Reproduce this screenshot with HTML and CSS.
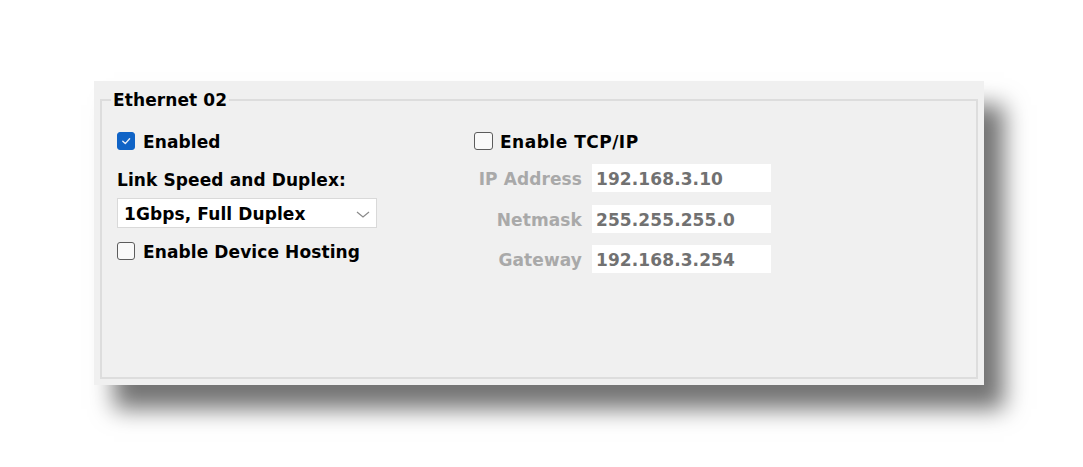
FILE: index.html
```html
<!DOCTYPE html>
<html lang="en">
<head>
<meta charset="utf-8">
<title>Ethernet 02</title>
<link rel="stylesheet" href="styles.css">
</head>
<body>
<div class="panel">
  <fieldset class="group">
    <legend class="group-title">Ethernet 02</legend>
    <div class="columns">
      <div class="col col-left">
        <label class="check-row">
          <span class="box box-checked">
            <svg width="18" height="18" viewBox="0 0 18 18"><path d="M5.8 9.3 L8.3 11.6 L12.6 6.8" fill="none" stroke="#e8eef8" stroke-width="1.4" stroke-linecap="round" stroke-linejoin="round"/></svg>
          </span>
          <span class="check-label">Enabled</span>
        </label>
        <div class="field-label">Link Speed and Duplex:</div>
        <div class="select">
          <span class="select-value">1Gbps, Full Duplex</span>
          <svg class="chevron" width="14" height="7" viewBox="0 0 14 7"><path d="M1 1 L7 6 L13 1" fill="none" stroke="#8a8a8a" stroke-width="1.2"/></svg>
        </div>
        <label class="check-row hosting">
          <span class="box"></span>
          <span class="check-label">Enable Device Hosting</span>
        </label>
      </div>
      <div class="col col-right">
        <label class="check-row">
          <span class="box"></span>
          <span class="check-label">Enable TCP/IP</span>
        </label>
        <div class="ip-grid">
          <span class="ip-label">IP Address</span>
          <div class="ip-input">192.168.3.10</div>
          <span class="ip-label">Netmask</span>
          <div class="ip-input">255.255.255.0</div>
          <span class="ip-label">Gateway</span>
          <div class="ip-input">192.168.3.254</div>
        </div>
      </div>
    </div>
  </fieldset>
</div>
</body>
</html>
```
FILE: styles.css
```css
html, body {
  margin: 0;
  padding: 0;
  background: #ffffff;
}
body {
  min-height: 467px;
  padding-top: 81px;
  box-sizing: border-box;
  font-family: "DejaVu Sans", Verdana, sans-serif;
  font-weight: bold;
  font-size: 17px;
  letter-spacing: 0.1px;
  color: #000;
}
.panel {
  margin: 0 0 0 94px;
  width: 890px;
  height: 304px;
  box-sizing: border-box;
  padding: 8px 6px 6px 6px;
  background: #f0f0f0;
  box-shadow: 20px 24px 22px rgba(0, 0, 0, 0.55);
  display: flex;
}
.group {
  flex: 1;
  margin: 0;
  border: 2px solid #dddddd;
  padding: 20px 15px 0 15px;
  min-width: 0;
}
.group-title {
  margin-left: -6px;
  padding: 1px 2px 0 2px;
  line-height: 21px;
  height: 22px;
  box-sizing: border-box;
}
.columns {
  display: flex;
}
.col {
  display: flex;
  flex-direction: column;
}
.col-left {
  width: 357px;
}
.check-row {
  display: flex;
  align-items: center;
  height: 20px;
}
.box {
  width: 18px;
  height: 18px;
  box-sizing: border-box;
  border: 1.5px solid #5c5c5c;
  border-radius: 3px;
  background: #f9f9f9;
  margin-right: 8px;
  flex: none;
}
.box-checked {
  background: #0f63c6;
  border-color: #0f63c6;
  display: flex;
  align-items: center;
  justify-content: center;
}
.box-checked svg {
  margin: -1.5px;
}
.check-label {
  line-height: 20px;
  padding-top: 2px;
}
.col-right .box {
  width: 19px;
  margin-right: 7px;
}
.col-right .check-label {
  letter-spacing: 0.5px;
}
.field-label {
  margin-top: 18px;
  line-height: 20px;
  padding-top: 1px;
  height: 20px;
  box-sizing: border-box;
}
.select {
  margin-top: 9px;
  width: 260px;
  height: 30px;
  box-sizing: border-box;
  border: 1px solid #d9d9d9;
  background: #ffffff;
  display: flex;
  align-items: center;
  padding: 1px 6px 0 6px;
}
.select-value {
  flex: 1;
}
.chevron {
  margin-top: 1px;
}
.hosting {
  margin-top: 13px;
}
.ip-grid {
  margin-top: 13px;
  display: grid;
  grid-template-columns: 108px 179px;
  column-gap: 10px;
  row-gap: 12.5px;
  align-items: center;
}
.ip-label {
  text-align: right;
  color: #a9a9a9;
  line-height: 20px;
  padding-top: 2px;
}
.ip-input {
  height: 28px;
  line-height: 28px;
  box-sizing: border-box;
  padding-top: 1px;
  background: #ffffff;
  color: #717171;
  padding-left: 4px;
}
```
